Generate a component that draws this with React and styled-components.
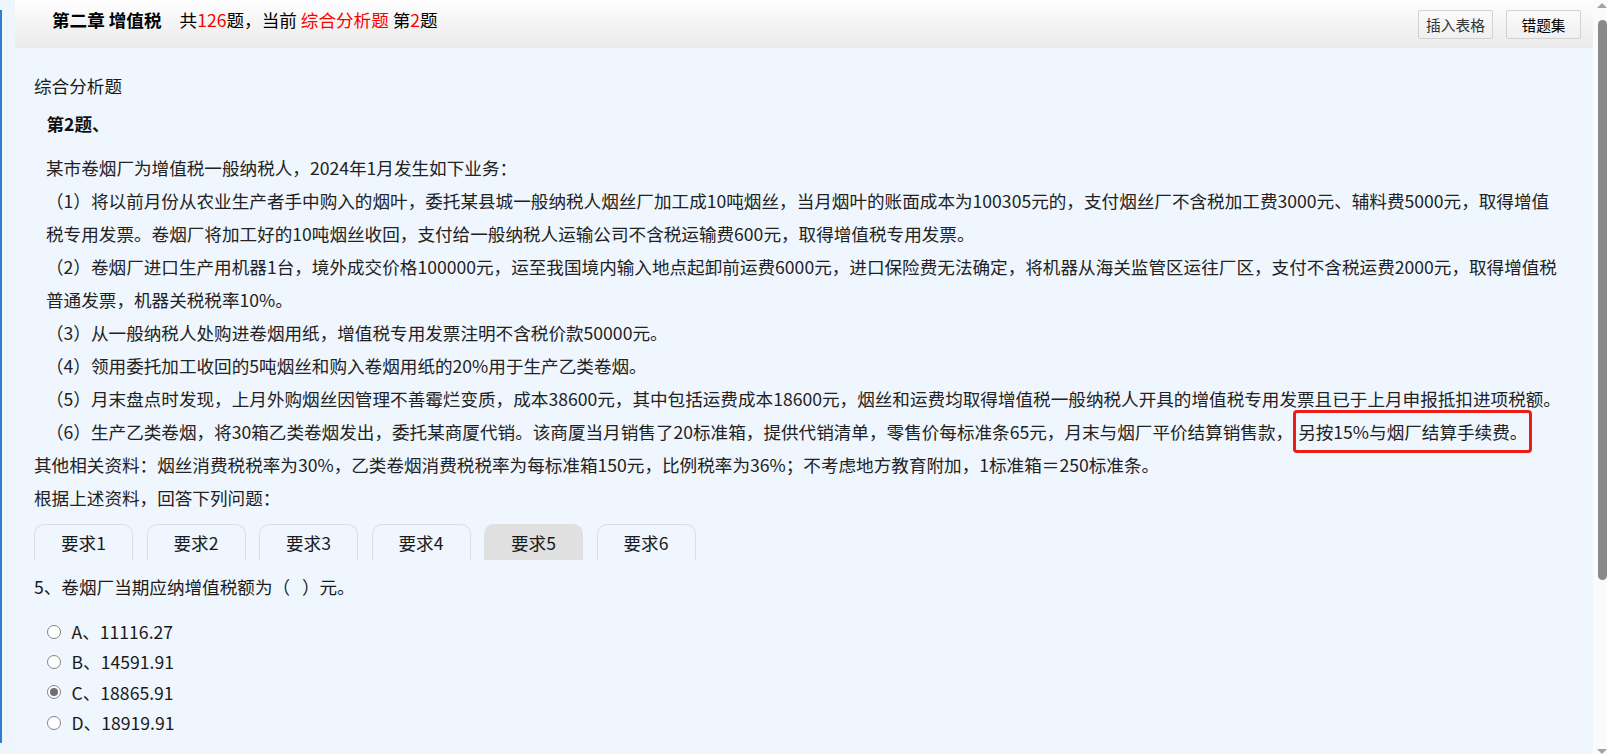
import React from "react";
import styled, { createGlobalStyle } from "styled-components";

const GlobalStyle = createGlobalStyle`
  html, body { margin: 0; padding: 0; height: 100%; overflow: hidden; }
  body {
    font-family: "Noto Sans CJK SC", "Noto Sans", "Liberation Sans", sans-serif;
    background: #eef5fd;
    color: #222;
  }
  #root { height: 100%; }
`;

const Page = styled.div`
  display: flex;
  height: 754px;
  width: 100%;
  overflow: hidden;
`;

const LeftRail = styled.div`
  width: 15px;
  flex: none;
  display: flex;
  flex-direction: column;
  background: #eef5fd;
`;

const RailLine = styled.div`
  margin-top: 10px;
  width: 2px;
  height: 733px;
  background: #2f7fcf;
`;

const Main = styled.div`
  flex: 1;
  min-width: 0;
  display: flex;
  flex-direction: column;
`;

const Header = styled.div`
  height: 48px;
  flex: none;
  display: flex;
  align-items: flex-start;
  padding: 0 12px 0 37px;
  background: linear-gradient(#ffffff 0%, #f5f5f5 45%, #ebebeb 100%);
  font-size: 17.6px;
  color: #000;
`;

const HeaderTitle = styled.div`
  line-height: 40px;
  font-weight: 700;
  margin-right: 18px;
  white-space: nowrap;
`;

const HeaderInfo = styled.div`
  line-height: 40px;
  white-space: nowrap;
`;

const Red = styled.span`
  color: #ff0000;
`;

const HeaderActions = styled.div`
  margin-left: auto;
  margin-top: 10px;
  display: flex;
  gap: 13px;
`;

const ToolButton = styled.button`
  width: 75px;
  height: 29px;
  padding: 0;
  border: 1px solid #d2d2d2;
  border-radius: 2px;
  background: linear-gradient(#fbfbfb, #f0f0f0);
  font-family: "Noto Sans CJK SC", sans-serif;
  font-size: 14.7px;
  color: ${(p) => (p.$strong ? "#000" : "#333")};
  display: flex;
  align-items: center;
  justify-content: center;
`;

const Content = styled.div`
  flex: 1;
  background: #eff6fe;
  padding: 20.5px 0 0 19px;
  font-size: 17.6px;
  color: #222;
`;

const SectionLabel = styled.div`
  line-height: 33px;
  color: #1a1a1a;
`;

const QuestionTitle = styled.div`
  margin: 5.5px 0 0 12.5px;
  line-height: 33px;
  font-weight: 700;
  color: #111;
`;

const Stem = styled.div`
  margin-top: 10.5px;
  line-height: 33px;
  white-space: nowrap;
`;

const StemLine = styled.div`
  padding-left: ${(p) => (p.$flush ? "0" : "12px")};
`;

const Highlight = styled.span`
  border: 3px solid #ec1c17;
  border-radius: 4px;
  padding: 6px 2px;
`;

const TabBar = styled.div`
  margin-top: 10.5px;
  display: flex;
  gap: 13.5px;
`;

const Tab = styled.div`
  width: 99px;
  height: 36px;
  box-sizing: border-box;
  border: 1px solid #dedede;
  border-bottom: none;
  border-radius: 10px 10px 0 0;
  background: ${(p) => (p.$active ? "#e0e0e0" : "transparent")};
  display: flex;
  align-items: center;
  justify-content: center;
  color: #1a1a1a;
`;

const QuestionText = styled.div`
  margin-top: 9.5px;
  line-height: 33px;
  color: #1a1a1a;
`;

const OptionList = styled.div`
  margin-top: 14px;
  padding-left: 12.5px;
`;

const OptionRow = styled.div`
  height: 30.33px;
  display: flex;
  align-items: center;
  gap: 11px;
  color: #1a1a1a;
`;

const Radio = styled.span`
  width: 14px;
  height: 14px;
  box-sizing: border-box;
  border-radius: 50%;
  border: 1px solid #858585;
  background: #fff;
  display: flex;
  align-items: center;
  justify-content: center;
  &::after {
    content: "";
    width: 8px;
    height: 8px;
    border-radius: 50%;
    background: ${(p) => (p.$checked ? "#6f6f6f" : "transparent")};
  }
`;

const ScrollTrack = styled.div`
  width: 14px;
  flex: none;
  background: #fbfbfb;
  display: flex;
  flex-direction: column;
  align-items: center;
`;

const ArrowUp = styled.div`
  margin: 3px 0 0 3px;
  width: 0;
  height: 0;
  border-left: 5px solid transparent;
  border-right: 5px solid transparent;
  border-bottom: 5px solid #a3a3a3;
`;

const ArrowDown = styled.div`
  margin: auto 0 0 3px;
  width: 0;
  height: 0;
  border-left: 5px solid transparent;
  border-right: 5px solid transparent;
  border-top: 5px solid #a3a3a3;
`;

const Thumb = styled.div`
  margin: 12px 0 0 4px;
  width: 9px;
  height: 560px;
  border-radius: 5px;
  background: #8a8a8a;
`;

const tabs = ["要求1", "要求2", "要求3", "要求4", "要求5", "要求6"];
const options = [
  { key: "A", value: "11116.27" },
  { key: "B", value: "14591.91" },
  { key: "C", value: "18865.91", checked: true },
  { key: "D", value: "18919.91" },
];

export default function App() {
  return (
    <>
      <GlobalStyle />
      <Page>
        <LeftRail>
          <RailLine />
        </LeftRail>
        <Main>
          <Header>
            <HeaderTitle>第二章 增值税</HeaderTitle>
            <HeaderInfo>
              共<Red>126</Red>题，当前 <Red>综合分析题</Red> 第<Red>2</Red>题
            </HeaderInfo>
            <HeaderActions>
              <ToolButton>插入表格</ToolButton>
              <ToolButton $strong>错题集</ToolButton>
            </HeaderActions>
          </Header>
          <Content>
            <SectionLabel>综合分析题</SectionLabel>
            <QuestionTitle>第2题、</QuestionTitle>
            <Stem>
              <StemLine>某市卷烟厂为增值税一般纳税人，2024年1月发生如下业务：</StemLine>
              <StemLine>（1）将以前月份从农业生产者手中购入的烟叶，委托某县城一般纳税人烟丝厂加工成10吨烟丝，当月烟叶的账面成本为100305元的，支付烟丝厂不含税加工费3000元、辅料费5000元，取得增值</StemLine>
              <StemLine>税专用发票。卷烟厂将加工好的10吨烟丝收回，支付给一般纳税人运输公司不含税运输费600元，取得增值税专用发票。</StemLine>
              <StemLine>（2）卷烟厂进口生产用机器1台，境外成交价格100000元，运至我国境内输入地点起卸前运费6000元，进口保险费无法确定，将机器从海关监管区运往厂区，支付不含税运费2000元，取得增值税</StemLine>
              <StemLine>普通发票，机器关税税率10%。</StemLine>
              <StemLine>（3）从一般纳税人处购进卷烟用纸，增值税专用发票注明不含税价款50000元。</StemLine>
              <StemLine>（4）领用委托加工收回的5吨烟丝和购入卷烟用纸的20%用于生产乙类卷烟。</StemLine>
              <StemLine>（5）月末盘点时发现，上月外购烟丝因管理不善霉烂变质，成本38600元，其中包括运费成本18600元，烟丝和运费均取得增值税一般纳税人开具的增值税专用发票且已于上月申报抵扣进项税额。</StemLine>
              <StemLine>
                （6）生产乙类卷烟，将30箱乙类卷烟发出，委托某商厦代销。该商厦当月销售了20标准箱，提供代销清单，零售价每标准条65元，月末与烟厂平价结算销售款，
                <Highlight>另按15%与烟厂结算手续费。</Highlight>
              </StemLine>
              <StemLine $flush>其他相关资料：烟丝消费税税率为30%，乙类卷烟消费税税率为每标准箱150元，比例税率为36%；不考虑地方教育附加，1标准箱＝250标准条。</StemLine>
              <StemLine $flush>根据上述资料，回答下列问题：</StemLine>
            </Stem>
            <TabBar>
              {tabs.map((t, i) => (
                <Tab key={t} $active={i === 4}>
                  {t}
                </Tab>
              ))}
            </TabBar>
            <QuestionText>5、卷烟厂当期应纳增值税额为（&nbsp;&nbsp;&nbsp;）元。</QuestionText>
            <OptionList>
              {options.map((o) => (
                <OptionRow key={o.key}>
                  <Radio $checked={o.checked} />
                  <span>
                    {o.key}、{o.value}
                  </span>
                </OptionRow>
              ))}
            </OptionList>
          </Content>
        </Main>
        <ScrollTrack>
          <ArrowUp />
          <Thumb />
          <ArrowDown />
        </ScrollTrack>
      </Page>
    </>
  );
}
